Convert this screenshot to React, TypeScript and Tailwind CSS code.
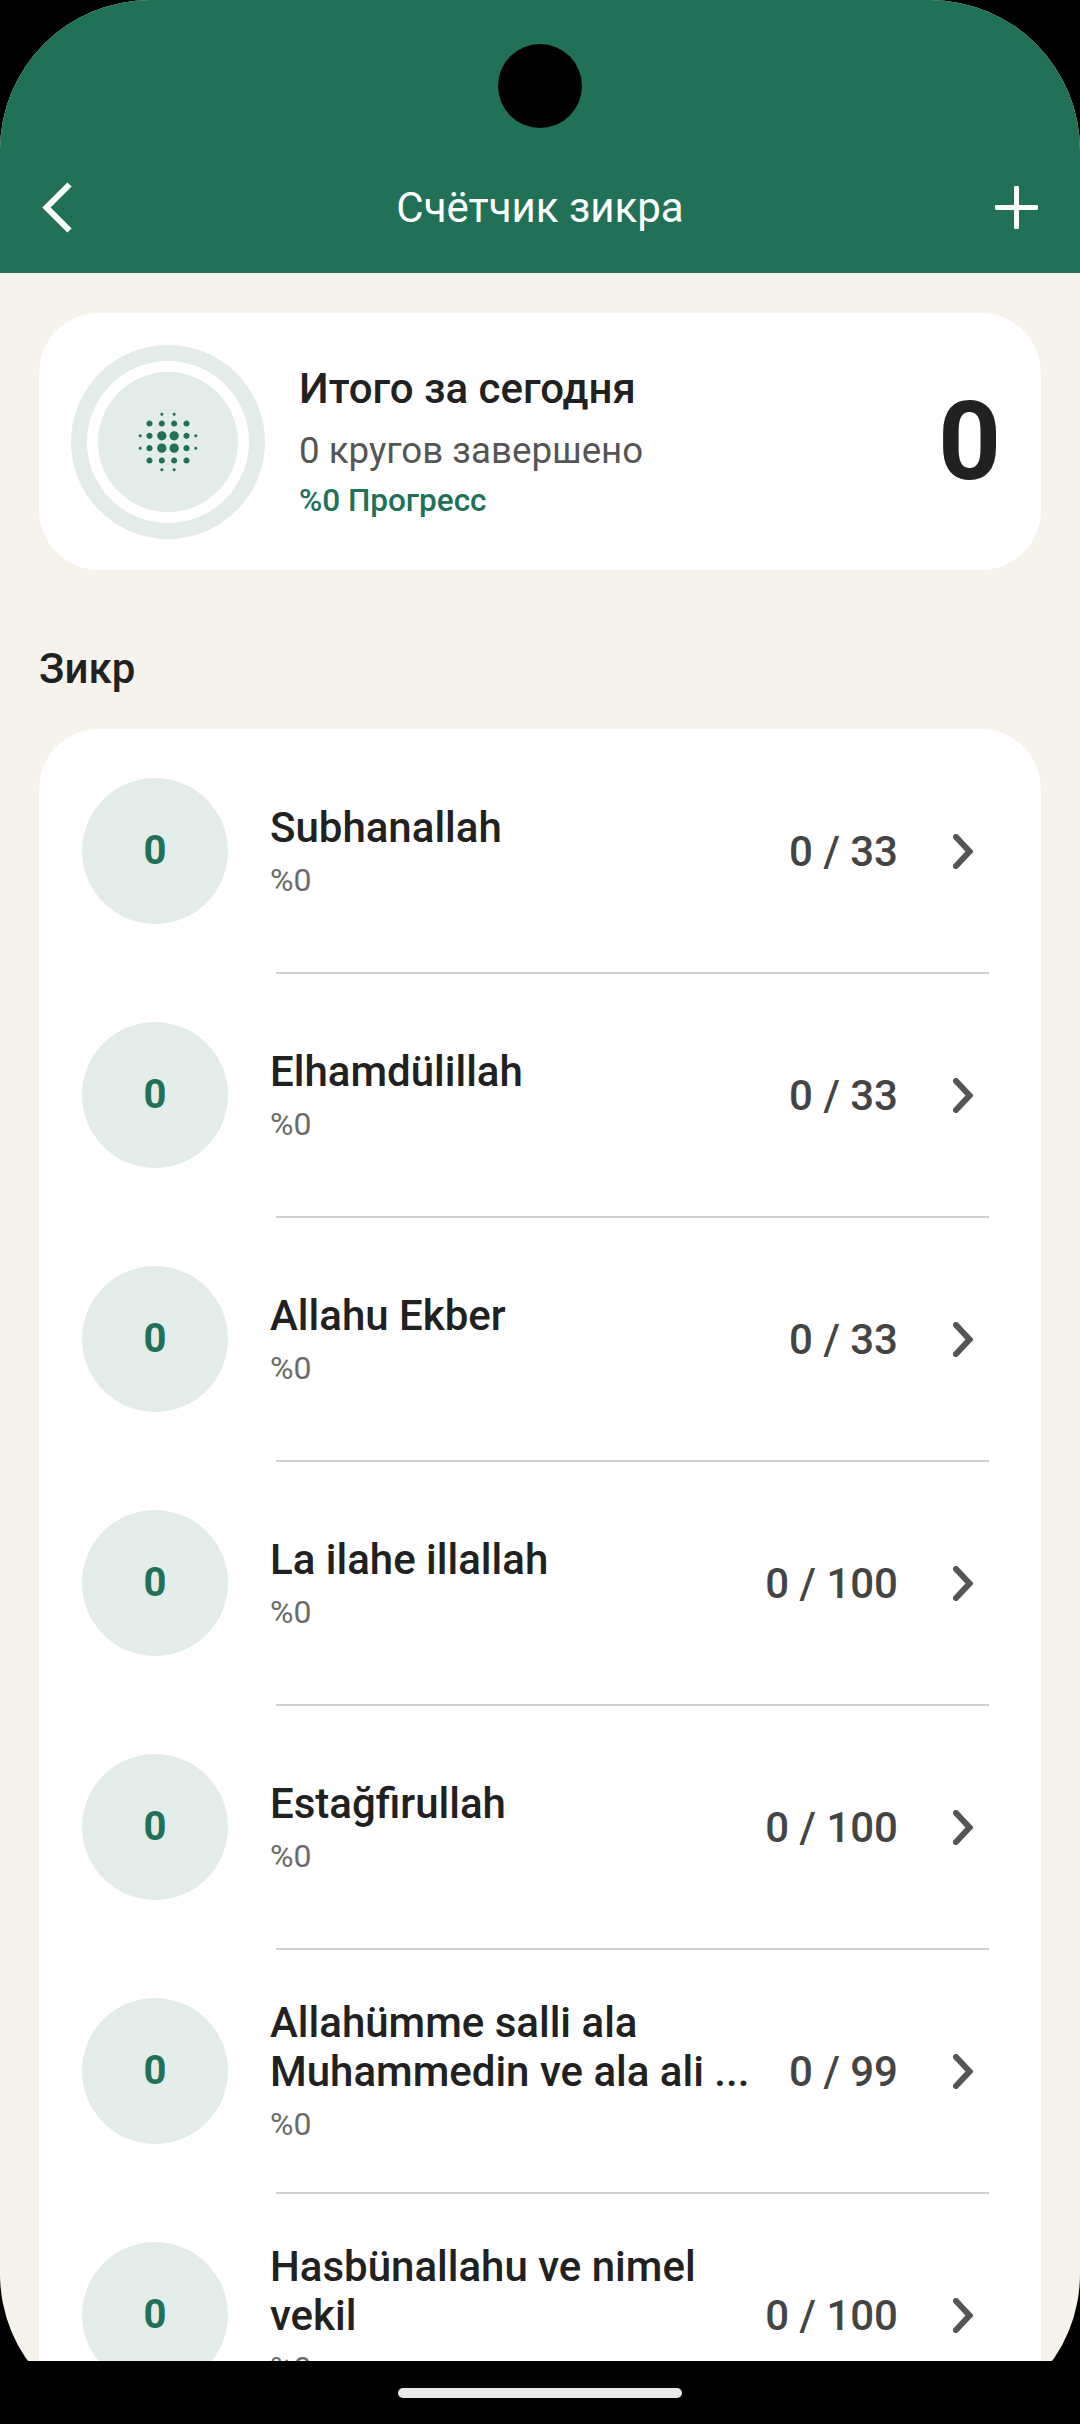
import { MdBlurOn } from "react-icons/md";

const zikrs = [
  { name: "Subhanallah", goal: 33 },
  { name: "Elhamdülillah", goal: 33 },
  { name: "Allahu Ekber", goal: 33 },
  { name: "La ilahe illallah", goal: 100 },
  { name: "Estağfirullah", goal: 100 },
  { name: "Allahümme salli ala Muhammedin ve ala ali ...", goal: 99 },
  { name: "Hasbünallahu ve nimel vekil", goal: 100 },
];

function ZikrRow({ name, goal, last }: { name: string; goal: number; last: boolean }) {
  return (
    <div>
      <div className="flex h-[242px] items-center pl-[43px] pr-[68px]">
        <div className="flex h-[146px] w-[146px] shrink-0 items-center justify-center rounded-full bg-[#e4ece9] text-[40px] font-bold text-[#207157]">
          0
        </div>
        <div className="ml-[42px] min-w-0 flex-1 pr-[20px]">
          <div className="text-[42px] leading-[49px] font-medium text-[#212121]">{name}</div>
          <div className="mt-[8px] text-[32px] leading-[40px] text-[#6b6b6b]">%0</div>
        </div>
        <div className="shrink-0 text-[42px] font-medium text-[#444444]">0 / {goal}</div>
        <svg className="ml-[55px] shrink-0" width="20" height="35" viewBox="0 0 20 35" fill="none">
          <path d="M3 3 L16.5 17.5 L3 32" stroke="#555555" strokeWidth="6" strokeLinecap="round" strokeLinejoin="miter" />
        </svg>
      </div>
      {!last && <div className="ml-[237px] mr-[52px] h-[2px] bg-[#cfcfcf]" />}
    </div>
  );
}

export default function App() {
  return (
    <div className="relative h-[2424px] w-[1080px] overflow-hidden bg-black font-['Roboto',sans-serif]">
      <div className="h-[2424px] overflow-hidden rounded-[150px] bg-[#f6f3ec]">
        <div className="flex h-[273px] items-center justify-between bg-[#207157] pl-[42px] pr-[42px] pt-[142px]">
          <div className="w-[43px]">
            <svg width="30" height="51" viewBox="0 0 30 51" fill="none">
              <path d="M27.5 2.5 L4.5 25.5 L27.5 48.5" stroke="white" strokeWidth="6" />
            </svg>
          </div>
          <div className="text-[42px] leading-[56px] text-white">Счётчик зикра</div>
          <svg width="43" height="43" viewBox="0 0 43 43" fill="none">
            <path d="M21.5 2 V41 M2 21.5 H41" stroke="white" strokeWidth="5" strokeLinecap="round" />
          </svg>
        </div>

        <div className="px-[39px]">
          <div className="mt-[40px] flex h-[257px] items-center rounded-[60px] bg-white pl-[32px] pr-[40px]">
            <div className="flex h-[194px] w-[194px] shrink-0 items-center justify-center rounded-full border-[16px] border-[#e4ece9]">
              <div className="flex h-[140px] w-[140px] items-center justify-center rounded-full bg-[#e4ece9] text-[#207157]">
                <MdBlurOn size={74} />
              </div>
            </div>
            <div className="ml-[34px] flex-1 pt-[3px]">
              <div className="text-[42px] leading-[48px] font-medium text-[#212121]">Итого за сегодня</div>
              <div className="mt-[16px] text-[36.7px] leading-[44px] text-[#555555]">0 кругов завершено</div>
              <div className="mt-[8px] text-[31.5px] leading-[40px] font-medium text-[#207157]">%0 Прогресс</div>
            </div>
            <div className="text-[110px] leading-none font-bold text-[#212121]">0</div>
          </div>

          <div className="mt-[71px] text-[42px] leading-[56px] font-medium text-[#212121]">Зикр</div>

          <div className="mt-[32px] overflow-hidden rounded-[60px] bg-white pt-[1px]">
            {zikrs.map((z, i) => (
              <ZikrRow key={z.name} name={z.name} goal={z.goal} last={i === zikrs.length - 1} />
            ))}
          </div>
        </div>
      </div>

      {/* camera hole */}
      <div className="absolute left-[498px] top-[44px] h-[84px] w-[84px] rounded-full bg-black" />

      {/* nav bar */}
      <div className="absolute bottom-0 left-0 right-0 flex h-[63px] justify-center bg-black pt-[27px]">
        <div className="h-[10px] w-[284px] rounded-full bg-[#e8e8e8]" />
      </div>
    </div>
  );
}
